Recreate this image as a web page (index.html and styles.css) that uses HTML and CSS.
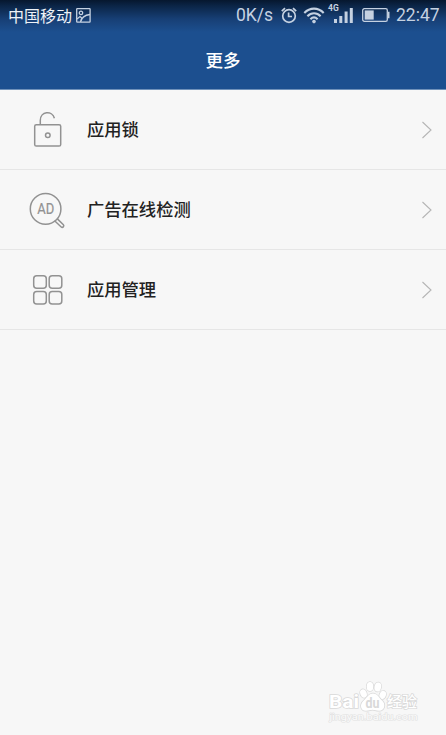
FILE: index.html
```html
<!DOCTYPE html>
<html lang="zh-CN">
<head>
    <meta charset="UTF-8">
    <meta name="viewport" content="width=device-width, initial-scale=1.0">
    <title>更多</title>
    <link rel="stylesheet" href="styles.css">
</head>
<body>
    <div class="screen">
        <header class="header">
            <div class="status-bar">
                <span class="carrier">中国移动</span>
                <svg class="picture-icon" width="15" height="15" viewBox="0 0 15 15">
                    <rect x="0.7" y="0.7" width="13.4" height="13.4" rx="0.6"/>
                    <circle cx="5" cy="4.9" r="1.7"/>
                    <path d="M1 11 L4 8.5 L6 10.2 M4.5 14 C5.5 9.5 9 7 14 6.5"/>
                </svg>
                <span class="speed">0K/s</span>
                <svg class="alarm-icon" width="16" height="17" viewBox="0 0 16 17">
                    <circle cx="8" cy="9" r="6.3"/>
                    <path d="M7.6 5.5 V9.5 H11 M0.8 4.2 L4 1.2 M15.2 4.2 L12 1.2"/>
                </svg>
                <svg class="wifi-icon" width="22" height="17" viewBox="0 0 22 17">
                    <path d="M1.3 6 C7 0.2 15 0.2 20.7 6 M4.4 9.2 C8.3 5.2 13.7 5.2 17.6 9.2 M7.4 12.2 C9.6 10 12.4 10 14.6 12.2"/>
                    <circle cx="11" cy="14.6" r="1.8"/>
                </svg>
                <div class="signal">
                    <span class="network">4G</span>
                    <svg width="19" height="17" viewBox="0 0 19 17">
                        <path d="M0 12 H3 V16 H0 Z M5.3 9 H8.3 V16 H5.3 Z M10.6 4.5 H13.6 V16 H10.6 Z M15.8 1 H18.8 V16 H15.8 Z"/>
                    </svg>
                </div>
                <svg class="battery-icon" width="28" height="14" viewBox="0 0 28 14">
                    <rect class="battery-case" x="0.7" y="0.7" width="24.6" height="12.6" rx="1.6"/>
                    <rect class="battery-level" x="2.7" y="2.4" width="9" height="9.2"/>
                    <path class="battery-tip" d="M26 3.8 H27.5 V10.2 H26 Z"/>
                </svg>
                <span class="clock">22:47</span>
            </div>
            <h1 class="title">更多</h1>
        </header>

        <ul class="menu">
            <li class="menu-item">
                <svg class="menu-icon" width="40" height="40" viewBox="0 0 40 40">
                    <rect x="7.7" y="14.7" width="26" height="21.3" rx="1.6"/>
                    <path d="M13.3 14.5 V10.5 C13.3 1.2 25.2 0.2 27.4 8.2"/>
                    <circle cx="20.8" cy="25.2" r="2.3"/>
                </svg>
                <span class="menu-label">应用锁</span>
                <svg class="arrow" width="12" height="18" viewBox="0 0 12 18">
                    <path d="M1.5 1 L10 9 L1.5 17"/>
                </svg>
            </li>
            <li class="menu-item">
                <svg class="menu-icon" width="40" height="40" viewBox="0 0 40 40">
                    <circle cx="18.6" cy="18.9" r="15.3"/>
                    <path d="M27.6 30.8 L34.2 37 Q35.3 37.8 36.3 36.9 Q37.3 35.8 36.4 34.7 L30.1 28.6"/>
                    <text x="10.2" y="24" textLength="17" lengthAdjust="spacingAndGlyphs">AD</text>
                </svg>
                <span class="menu-label">广告在线检测</span>
                <svg class="arrow" width="12" height="18" viewBox="0 0 12 18">
                    <path d="M1.5 1 L10 9 L1.5 17"/>
                </svg>
            </li>
            <li class="menu-item">
                <svg class="menu-icon" width="40" height="40" viewBox="0 0 40 40">
                    <rect x="6.7" y="5.7" width="12.6" height="12.6" rx="3"/>
                    <rect x="22.2" y="5.7" width="12.6" height="12.6" rx="3"/>
                    <rect x="6.7" y="21.4" width="12.6" height="12.6" rx="3"/>
                    <rect x="22.2" y="21.4" width="12.6" height="12.6" rx="3"/>
                </svg>
                <span class="menu-label">应用管理</span>
                <svg class="arrow" width="12" height="18" viewBox="0 0 12 18">
                    <path d="M1.5 1 L10 9 L1.5 17"/>
                </svg>
            </li>
        </ul>

        <footer class="watermark">
            <svg width="94" height="46" viewBox="0 0 94 46">
                <text class="mark-latin" x="2" y="27.5" textLength="30" lengthAdjust="spacingAndGlyphs">Bai</text>
                <g class="paw">
                    <ellipse cx="36.5" cy="13.5" rx="3.2" ry="4.3" transform="rotate(-20 36.5 13.5)"/>
                    <ellipse cx="43" cy="6.5" rx="3.3" ry="4.6"/>
                    <ellipse cx="50.8" cy="7" rx="3.3" ry="4.6" transform="rotate(12 50.8 7)"/>
                    <ellipse cx="55.7" cy="15" rx="3.2" ry="4.2" transform="rotate(20 55.7 15)"/>
                    <path d="M46 13.5 C50.5 13.5 52 18 55.3 20.8 C59 24.5 57.5 30.5 52.5 30.8 C49 31 48 29.8 45.5 29.8 C43 29.8 42 31 38.5 30.8 C33.5 30.5 32.5 24.5 36.3 21 C39.8 18 41.5 13.5 46 13.5 Z"/>
                </g>
                <text class="mark-du" x="38.5" y="27.5" textLength="14" lengthAdjust="spacingAndGlyphs">du</text>
                <text class="mark-cn" x="60" y="27" textLength="30" lengthAdjust="spacingAndGlyphs">经验</text>
                <text class="mark-url" x="2.5" y="40" textLength="88" lengthAdjust="spacingAndGlyphs">jingyan.baidu.com</text>
            </svg>
        </footer>
    </div>
</body>
</html>
```
FILE: styles.css
```css
:root {
    --header-blue: #1c4f8f;
    --status-color: #c5d1e1;
    --background-color: #f7f7f7;
    --icon-color: #929292;
    --mark-color: #d9d9d9;
}

* {
    box-sizing: border-box;
    margin: 0;
    padding: 0;
}

body {
    font-family: Roboto, "Noto Sans CJK SC", sans-serif;
    background-color: var(--background-color);
    color: #222;
}

svg {
    display: block;
    flex-shrink: 0;
    fill: none;
}

.screen {
    display: flex;
    flex-direction: column;
    height: 735px;
    overflow: hidden;
}

.header {
    height: 90px;
    background: linear-gradient(#06172e 0, #0b2547 6px, #173f75 19px, var(--header-blue) 32px);
    border-bottom: 1px solid #6f91ba;
}

.status-bar {
    display: flex;
    align-items: center;
    height: 30px;
    padding: 0 7px 0 8px;
    color: var(--status-color);
    stroke: var(--status-color);
    white-space: nowrap;
}

.carrier {
    width: 64px;
    padding-top: 3px;
    font-size: 16px;
    line-height: 27px;
    color: #eef2f7;
}

.picture-icon {
    margin-left: 4px;
    stroke-width: 1.3;
}

.speed {
    margin-left: auto;
    font-size: 17.5px;
}

.alarm-icon {
    margin-left: 8px;
    stroke-width: 1.7;
}

.wifi-icon {
    margin-left: 6px;
    stroke-width: 2.1;
}

.wifi-icon circle {
    fill: var(--status-color);
    stroke: none;
}

.signal {
    position: relative;
    margin-left: 9px;
}

.signal svg {
    fill: var(--status-color);
    stroke: none;
}

.network {
    position: absolute;
    left: -6px;
    top: -3px;
    font-size: 8.5px;
    font-weight: 700;
    line-height: 9px;
}

.battery-icon {
    margin-left: 9px;
}

.battery-case {
    stroke-width: 1.3;
}

.battery-level,
.battery-tip {
    fill: var(--status-color);
    stroke: none;
}

.clock {
    width: 43px;
    margin-left: 6px;
    font-size: 17.5px;
}

.title {
    font-size: 17.5px;
    font-weight: 500;
    line-height: 62px;
    text-align: center;
    color: #fff;
}

.menu {
    list-style: none;
}

.menu-item {
    display: flex;
    align-items: center;
    height: 80px;
    padding: 0 13px 0 27px;
    border-bottom: 1px solid #e6e6e6;
}

.menu-icon {
    stroke: var(--icon-color);
    stroke-width: 1.5;
}

.menu-icon text {
    font-size: 14.5px;
    fill: var(--icon-color);
    stroke-width: 0.2;
}

.menu-label {
    flex: 1;
    margin-left: 20px;
    padding-bottom: 2px;
    font-size: 17.3px;
    font-weight: 500;
}

.arrow {
    stroke: #b5b5b5;
    stroke-width: 1.1;
}

.watermark {
    display: flex;
    justify-content: flex-end;
    margin-top: auto;
    padding: 0 25px 9px 0;
}

.watermark text,
.paw {
    fill: #fff;
    stroke: var(--mark-color);
    stroke-width: 1.5;
    paint-order: stroke;
}

.mark-latin {
    font-size: 19px;
    font-weight: 700;
}

.watermark .mark-du {
    font-size: 14px;
    font-weight: 700;
    fill: var(--mark-color);
    stroke: none;
}

.mark-cn {
    font-size: 15px;
    font-weight: 500;
}

.watermark .mark-url {
    font-size: 9.5px;
    fill: #fbfbfb;
    stroke: #e2e2e2;
    stroke-width: 1.2;
}
```
